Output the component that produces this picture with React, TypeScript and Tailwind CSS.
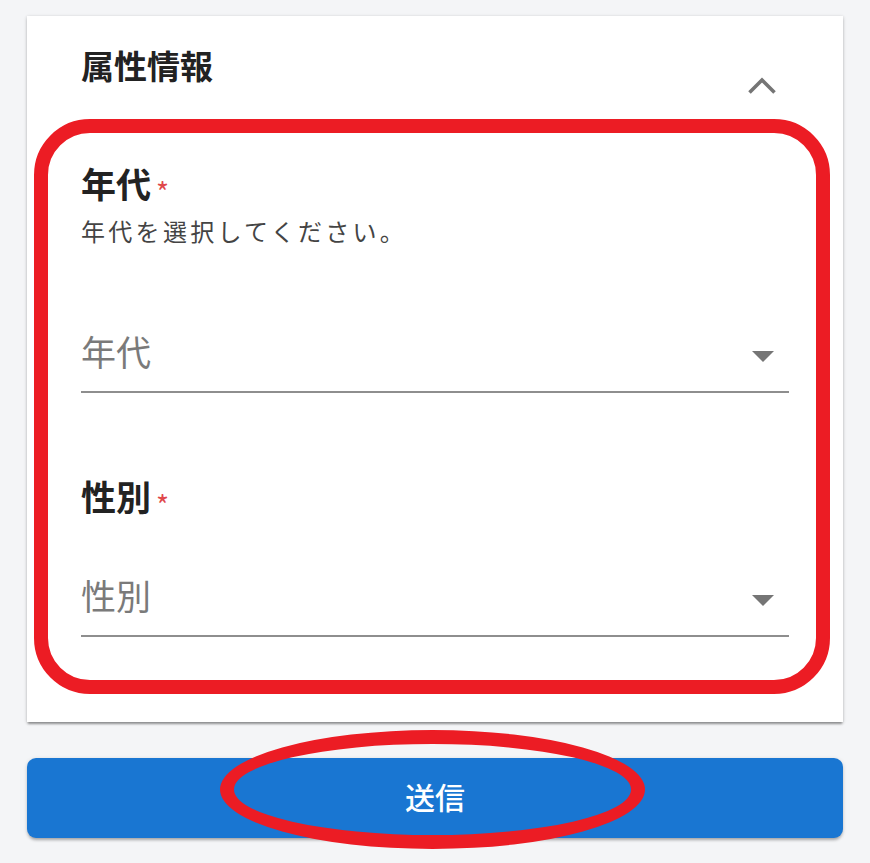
import React from "react";

const font = { fontFamily: '"Noto Sans CJK JP", "Noto Sans", sans-serif' };

function ArrowDown() {
  return (
    <svg width="22" height="11" viewBox="0 0 22 11" className="block">
      <path d="M0 0 L11 11 L22 0 Z" fill="#757575" />
    </svg>
  );
}

function ChevronUp() {
  return (
    <svg width="28" height="17" viewBox="0 0 28 17" className="block">
      <path d="M1.5 15.5 L14 3 L26.5 15.5" fill="none" stroke="#757575" strokeWidth="3.6" />
    </svg>
  );
}

function Field({ label, placeholder, helper }: { label: string; placeholder: string; helper?: string }) {
  return (
    <div>
      <div className="flex items-start h-[35px]">
        <span className="text-[35px] leading-[35px] font-bold text-[#222222]">{label}</span>
        <span className="text-[28px] leading-[28px] text-[#e0484b] ml-[5px] mt-[12px]">*</span>
      </div>
      {helper && (
        <div className="mt-[19px] text-[24px] leading-[24px] tracking-[3.3px] text-[#444444]">{helper}</div>
      )}
      <div className={helper ? "mt-[90px]" : "mt-[64px]"}>
        <div className="flex items-start justify-between h-[35px]">
          <span className="text-[35px] leading-[35px] text-[#7a7a7a]">{placeholder}</span>
          <div className="mr-[15px] mt-[18px]">
            <ArrowDown />
          </div>
        </div>
        <div className="mt-[23px] h-[2px] bg-[#8e8e8e]" />
      </div>
    </div>
  );
}

export default function App() {
  return (
    <div style={font} className="min-h-[863px] bg-[#f4f5f7] px-[27px] pt-[16px] pb-[26px]">
      <div className="bg-white shadow-[0_3px_2px_-1px_rgba(0,0,0,0.3),0_1px_3px_0_rgba(0,0,0,0.14),0_1px_4px_0_rgba(0,0,0,0.12)]">
        <div className="flex justify-between h-[103px]">
          <div className="pl-[54px] pt-[33px] text-[33px] leading-[33px] font-bold text-[#222222]">
            属性情報
          </div>
          <div className="pt-[61px] pr-[67px]">
            <ChevronUp />
          </div>
        </div>
        <div className="ml-[7px] mr-[13px] border-[14px] border-[#ec1c24] rounded-[56px] pt-[32px] pl-[33px] pr-[27px] pb-[43px]">
          <Field label="年代" placeholder="年代" helper="年代を選択してください。" />
          <div className="mt-[85px]">
            <Field label="性別" placeholder="性別" />
          </div>
        </div>
        <div className="h-[28px]" />
      </div>
      <div className="relative mt-[36px]">
        <button className="w-full h-[80px] pb-[5px] rounded-[9px] bg-[#1976d2] text-white text-[30px] leading-[30px] font-medium shadow-[0_3px_3px_-1px_rgba(0,0,0,0.25),0_1px_4px_0_rgba(0,0,0,0.14)]">
          送信
        </button>
        <div className="absolute left-[193px] top-[-28px] w-[425px] h-[119px] rounded-[50%] border-[14px] border-[#ec1c24]" />
      </div>
    </div>
  );
}
